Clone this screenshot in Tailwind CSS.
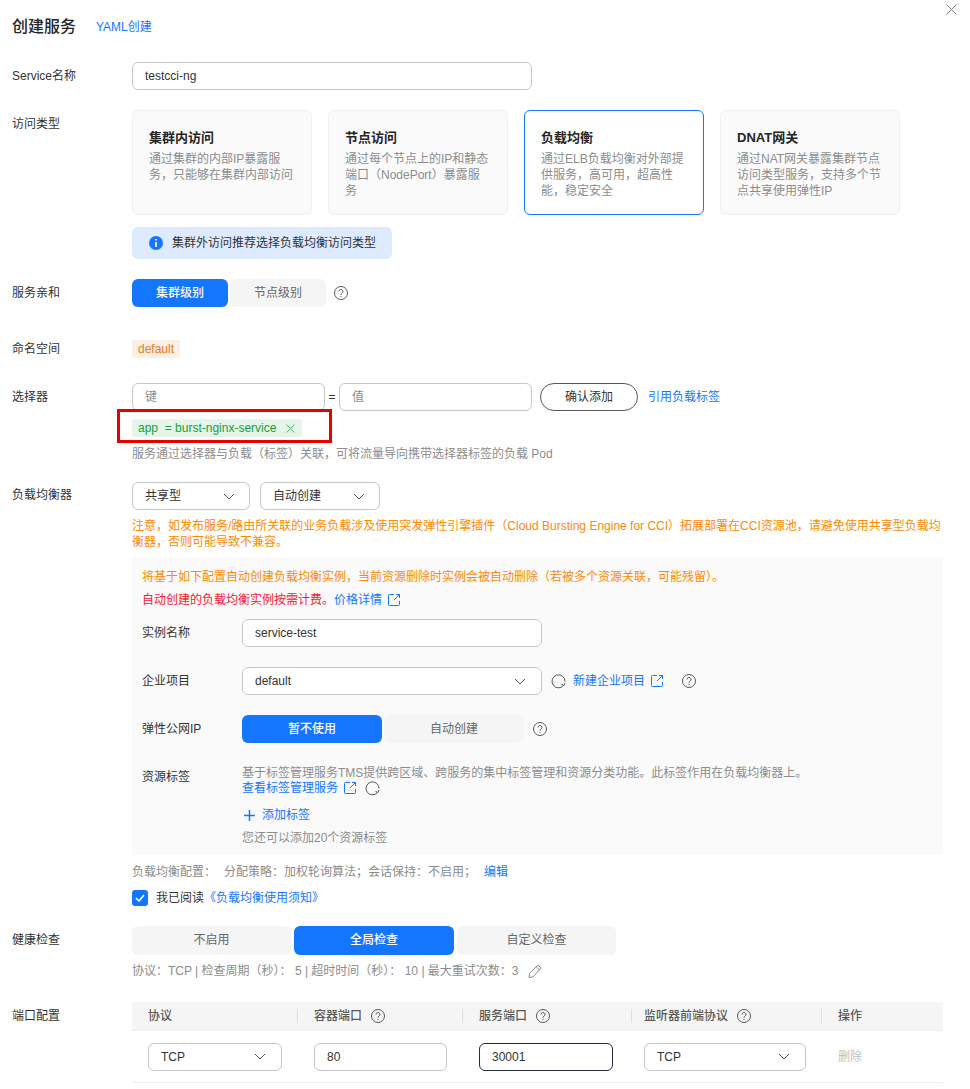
<!DOCTYPE html>
<html lang="zh-CN">
<head>
  <meta charset="UTF-8">
  <meta name="viewport" content="width=device-width, initial-scale=1.0">
  <title>创建服务</title>
  <script src="https://cdn.jsdelivr.net/npm/@tailwindcss/browser@4"></script>
</head>
<body class="bg-white h-[1089px] overflow-hidden font-['Liberation_Sans','Noto_Sans_CJK_SC',sans-serif] text-[12px] text-[#333]">
  <div class="relative pl-3 pr-[27px]">
    <!-- Close -->
    <svg class="absolute left-[946px] top-[4px] w-[11px] h-[11px] text-[#808080]" viewBox="0 0 11 11" fill="none" stroke="currentColor" stroke-width="1"><path d="M.5.5l10 10M10.5.5l-10 10"/></svg>

    <!-- Header -->
    <div class="flex items-center h-[54px]">
      <h1 class="text-[16px] font-medium text-[#252525] w-[84px]">创建服务</h1>
      <a class="text-[#1476ff]">YAML创建</a>
    </div>

    <!-- Service name -->
    <div class="flex mt-[8px]">
      <div class="w-[120px] leading-[28px]">Service名称</div>
      <div class="w-[400px] h-7 px-3 leading-[26px] border border-[#c7c7c7] rounded-md">testcci-ng</div>
    </div>

    <!-- Access type -->
    <div class="flex mt-[20px]">
      <div class="w-[120px] leading-[28px]">访问类型</div>
      <div>
        <div class="flex gap-4">
          <div class="w-[180px] h-[105px] bg-[#fafafa] border border-[#f0f0f0] rounded-md px-4 pt-[19px]">
            <div class="text-[13px] font-semibold leading-4 text-[#252525]">集群内访问</div>
            <p class="mt-[5px] leading-4 text-[#8c8c8c]">通过集群的内部IP暴露服务，只能够在集群内部访问</p>
          </div>
          <div class="w-[180px] h-[105px] bg-[#fafafa] border border-[#f0f0f0] rounded-md px-4 pt-[19px]">
            <div class="text-[13px] font-semibold leading-4 text-[#252525]">节点访问</div>
            <p class="mt-[5px] leading-4 text-[#8c8c8c]">通过每个节点上的IP和静态端口（NodePort）暴露服务</p>
          </div>
          <div class="w-[180px] h-[105px] bg-white border border-[#1476ff] rounded-md px-4 pt-[19px]">
            <div class="text-[13px] font-semibold leading-4 text-[#252525]">负载均衡</div>
            <p class="mt-[5px] leading-4 text-[#8c8c8c]">通过ELB负载均衡对外部提供服务，高可用，超高性能，稳定安全</p>
          </div>
          <div class="w-[180px] h-[105px] bg-[#fafafa] border border-[#f0f0f0] rounded-md px-4 pt-[19px]">
            <div class="text-[13px] font-semibold leading-4 text-[#252525]">DNAT网关</div>
            <p class="mt-[5px] leading-4 text-[#8c8c8c]">通过NAT网关暴露集群节点访问类型服务，支持多个节点共享使用弹性IP</p>
          </div>
        </div>
        <div class="mt-3 w-[260px] h-8 flex items-center gap-[9px] pl-[17px] bg-[#deebff] rounded-md">
          <svg class="w-[14px] h-[14px] shrink-0" viewBox="0 0 14 14"><circle cx="7" cy="7" r="7" fill="#1476ff"/><path d="M6.200 3h1.600v1.600H6.200zM6.200 6h1.600v5H6.200z" fill="#fff"/></svg>
          <span>集群外访问推荐选择负载均衡访问类型</span>
        </div>
      </div>
    </div>

    <!-- Affinity -->
    <div class="flex mt-[20px]">
      <div class="w-[120px] leading-[28px]">服务亲和</div>
      <div class="flex items-center">
        <div class="flex gap-[2px]">
          <div class="w-[96px] h-7 leading-[28px] text-center font-medium text-white bg-[#1476ff] rounded-md">集群级别</div>
          <div class="w-[96px] h-7 leading-[28px] text-center text-[#666] bg-[#f5f5f5] rounded-md">节点级别</div>
        </div>
        <svg class="ml-2 w-[14px] h-[14px] text-[#595959]" viewBox="0 0 14 14" fill="none" stroke="currentColor"><circle cx="7" cy="7" r="6.500"/><path d="M5 5.500a2 2 0 1 1 3 1.700c-.7.4-1 .8-1 1.600M7 10v1"/></svg>
      </div>
    </div>

    <!-- Namespace -->
    <div class="flex mt-[28px]">
      <div class="w-[120px] leading-[28px]">命名空间</div>
      <div class="flex items-center">
        <span class="h-[18px] px-[6px] leading-[18px] text-[#e8791f] bg-[#fcefe3] rounded-[3px]">default</span>
      </div>
    </div>

    <!-- Selector -->
    <div class="flex mt-[20px]">
      <div class="w-[120px] leading-[28px]">选择器</div>
      <div class="relative">
        <div class="flex items-center">
          <div class="w-[193px] h-7 px-3 leading-[26px] text-[#8c8c8c] border border-[#c7c7c7] rounded-md">键</div>
          <span class="w-[14px] text-center">=</span>
          <div class="w-[193px] h-7 px-3 leading-[26px] text-[#8c8c8c] border border-[#c7c7c7] rounded-md">值</div>
          <div class="ml-2 w-[98px] h-7 leading-[26px] text-center border border-[#595959] rounded-full">确认添加</div>
          <a class="ml-[10px] text-[#1476ff] -mt-[1px]">引用负载标签</a>
        </div>
        <div class="mt-2 w-[170px] h-[18px] flex items-center justify-between pl-[6px] pr-[7px] bg-[#e5f5e9] text-[#12a139] rounded-[3px]">
          <span>app &nbsp;= burst-nginx-service</span>
          <svg class="w-[9px] h-[9px] text-[#4dbb6d]" viewBox="0 0 9 9" fill="none" stroke="currentColor"><path d="M.5.5l8 8M8.500.5l-8 8"/></svg>
        </div>
        <div class="absolute left-[-15px] top-[26px] w-[215px] h-[34px] border-[3px] border-[#e60000]"></div>
        <div class="mt-[9px] leading-4 text-[#8c8c8c]">服务通过选择器与负载（标签）关联，可将流量导向携带选择器标签的负载 Pod</div>
      </div>
    </div>

    <!-- Load balancer -->
    <div class="flex mt-5">
      <div class="w-[120px] leading-[27px] shrink-0">负载均衡器</div>
      <div class="w-[811px]">
        <div class="flex gap-[10px]">
          <div class="w-[118px] h-7 pl-3 pr-[14px] flex items-center justify-between border border-[#c7c7c7] rounded-md">
            <span>共享型</span>
            <svg class="w-[12px] h-[7px] text-[#595959]" viewBox="0 0 12 7" fill="none" stroke="currentColor"><path d="M1 1l5 5 5-5"/></svg>
          </div>
          <div class="w-[120px] h-7 pl-3 pr-[14px] flex items-center justify-between border border-[#c7c7c7] rounded-md">
            <span>自动创建</span>
            <svg class="w-[12px] h-[7px] text-[#595959]" viewBox="0 0 12 7" fill="none" stroke="currentColor"><path d="M1 1l5 5 5-5"/></svg>
          </div>
        </div>
        <p class="mt-2 leading-4 text-[#ff8a00]">注意，如发布服务/路由所关联的业务负载涉及使用突发弹性引擎插件（Cloud Bursting Engine for CCI）拓展部署在CCI资源池，请避免使用共享型负载均衡器，否则可能导致不兼容。</p>

        <!-- Auto create panel -->
        <div class="mt-[7px] h-[298px] bg-[#fafafa] px-[10px] pt-[12px]">
          <div class="leading-4 text-[#ff8a00]">将基于如下配置自动创建负载均衡实例，当前资源删除时实例会被自动删除（若被多个资源关联，可能残留）。</div>
          <div class="mt-[7px] leading-4 flex items-center text-[#f5222d]">
            <span>自动创建的负载均衡实例按需计费。</span>
            <a class="text-[#1476ff]">价格详情</a>
            <svg class="ml-[6px] w-[12px] h-[12px] text-[#1476ff]" viewBox="0 0 12 12" fill="none" stroke="currentColor"><path d="M6 .5H1.500a1 1 0 0 0-1 1v9a1 1 0 0 0 1 1h9a1 1 0 0 0 1-1V7M8 .5h3.500V4M11.500.5L6 6"/></svg>
          </div>
          <div class="flex mt-[11px]">
            <div class="w-[100px] leading-[28px]">实例名称</div>
            <div class="w-[300px] h-7 px-3 leading-[26px] bg-white border border-[#c7c7c7] rounded-md">service-test</div>
          </div>
          <div class="flex items-center mt-5">
            <div class="w-[100px] leading-[28px]">企业项目</div>
            <div class="w-[300px] h-7 pl-3 pr-[15px] flex items-center justify-between bg-white border border-[#c7c7c7] rounded-md">
              <span>default</span>
              <svg class="w-[12px] h-[7px] text-[#595959]" viewBox="0 0 12 7" fill="none" stroke="currentColor"><path d="M1 1l5 5 5-5"/></svg>
            </div>
            <svg class="ml-[9px] w-[15px] h-[15px] text-[#595959]" viewBox="0 0 15 15" fill="none" stroke="currentColor"><path d="M12.500 11.500A6.500 6.500 0 1 1 14 7.500M10.500 10.500l2.500 1 1-2.500"/></svg>
            <a class="ml-[7px] text-[#1476ff]">新建企业项目</a>
            <svg class="ml-[6px] w-[12px] h-[12px] text-[#1476ff]" viewBox="0 0 12 12" fill="none" stroke="currentColor"><path d="M6 .5H1.500a1 1 0 0 0-1 1v9a1 1 0 0 0 1 1h9a1 1 0 0 0 1-1V7M8 .5h3.500V4M11.500.5L6 6"/></svg>
            <svg class="ml-[19px] w-[14px] h-[14px] text-[#595959]" viewBox="0 0 14 14" fill="none" stroke="currentColor"><circle cx="7" cy="7" r="6.500"/><path d="M5 5.500a2 2 0 1 1 3 1.700c-.7.4-1 .8-1 1.600M7 10v1"/></svg>
          </div>
          <div class="flex items-center mt-5">
            <div class="w-[100px] leading-[28px]">弹性公网IP</div>
            <div class="flex gap-[2px]">
              <div class="w-[140px] h-7 leading-[28px] text-center font-medium text-white bg-[#1476ff] rounded-md">暂不使用</div>
              <div class="w-[140px] h-7 leading-[28px] text-center text-[#666] bg-[#f5f5f5] rounded-md">自动创建</div>
            </div>
            <svg class="ml-[9px] w-[14px] h-[14px] text-[#595959]" viewBox="0 0 14 14" fill="none" stroke="currentColor"><circle cx="7" cy="7" r="6.500"/><path d="M5 5.500a2 2 0 1 1 3 1.700c-.7.4-1 .8-1 1.600M7 10v1"/></svg>
          </div>
          <div class="flex mt-5">
            <div class="w-[100px] leading-[28px]">资源标签</div>
            <div class="pt-[2px]">
              <div class="leading-4 text-[#8c8c8c]">基于标签管理服务TMS提供跨区域、跨服务的集中标签管理和资源分类功能。此标签作用在负载均衡器上。</div>
              <div class="-mt-[1px] flex items-center leading-4">
                <a class="text-[#1476ff]">查看标签管理服务</a>
                <svg class="ml-[6px] w-[12px] h-[12px] text-[#1476ff]" viewBox="0 0 12 12" fill="none" stroke="currentColor"><path d="M6 .5H1.500a1 1 0 0 0-1 1v9a1 1 0 0 0 1 1h9a1 1 0 0 0 1-1V7M8 .5h3.500V4M11.500.5L6 6"/></svg>
                <svg class="ml-[9px] w-[15px] h-[15px] text-[#595959]" viewBox="0 0 15 15" fill="none" stroke="currentColor"><path d="M12.500 11.500A6.500 6.500 0 1 1 14 7.500M10.500 10.500l2.500 1 1-2.500"/></svg>
              </div>
              <div class="mt-[11px] flex items-center gap-[7px] leading-4 text-[#1476ff]">
                <svg class="ml-[2px] w-[11px] h-[11px]" viewBox="0 0 11 11" fill="none" stroke="currentColor" stroke-width="1.500"><path d="M5.500 0v11M0 5.500h11"/></svg>
                <span>添加标签</span>
              </div>
              <div class="mt-[7px] leading-4 text-[#8c8c8c]">您还可以添加20个资源标签</div>
            </div>
          </div>
        </div>

        <div class="mt-[9px] flex leading-4 text-[#8c8c8c]">
          <span class="w-[92px]">负载均衡配置：</span>
          <span>分配策略：加权轮询算法；会话保持：不启用；</span>
          <a class="ml-[8px] text-[#1476ff]">编辑</a>
        </div>
        <div class="mt-[10px] flex items-center h-4">
          <span class="w-4 h-4 flex items-center justify-center bg-[#1476ff] rounded-[3px]">
            <svg class="w-[10px] h-[8px]" viewBox="0 0 10 8" fill="none" stroke="#fff" stroke-width="1.500"><path d="M1 4l3 3 5-6"/></svg>
          </span>
          <span class="ml-2">我已阅读</span>
          <a class="text-[#1476ff]">《负载均衡使用须知》</a>
        </div>
      </div>
    </div>

    <!-- Health check -->
    <div class="flex mt-[20px]">
      <div class="w-[120px] leading-[28px] shrink-0">健康检查</div>
      <div>
        <div class="flex gap-[3px]">
          <div class="w-[159px] h-[29px] leading-[29px] text-center text-[#666] bg-[#f5f5f5] rounded-md">不启用</div>
          <div class="w-[160px] h-[29px] leading-[29px] text-center font-medium text-white bg-[#1476ff] rounded-md">全局检查</div>
          <div class="w-[159px] h-[29px] leading-[29px] text-center text-[#666] bg-[#f5f5f5] rounded-md">自定义检查</div>
        </div>
        <div class="mt-[8px] flex items-center leading-4 text-[#8c8c8c]">
          <span>协议：TCP | 检查周期（秒）：&nbsp;5 | 超时时间（秒）：&nbsp;10 | 最大重试次数：3</span>
          <svg class="ml-[9px] w-[14px] h-[14px] text-[#8c8c8c]" viewBox="0 0 14 14" fill="none" stroke="currentColor"><path d="M10 1l3 3-8 9-4 .5.5-4zM8.500 3l3 3"/></svg>
        </div>
      </div>
    </div>

    <!-- Port config -->
    <div class="flex mt-[23px]">
      <div class="w-[120px] leading-[28px] shrink-0">端口配置</div>
      <div class="w-[811px]">
        <div class="h-7 flex items-center bg-[#f5f5f5] text-[#595959] font-medium">
          <div class="w-[166px] pl-4 h-[14px] leading-[14px] border-r border-[#dfdfdf]">协议</div>
          <div class="w-[165px] pl-4 h-[14px] leading-[14px] border-r border-[#dfdfdf] flex items-center gap-[9px]">容器端口
            <svg class="w-[14px] h-[14px] text-[#595959]" viewBox="0 0 14 14" fill="none" stroke="currentColor"><circle cx="7" cy="7" r="6.500"/><path d="M5 5.500a2 2 0 1 1 3 1.700c-.7.4-1 .8-1 1.600M7 10v1"/></svg>
          </div>
          <div class="w-[169px] pl-4 h-[14px] leading-[14px] border-r border-[#dfdfdf] flex items-center gap-[9px]">服务端口
            <svg class="w-[14px] h-[14px] text-[#595959]" viewBox="0 0 14 14" fill="none" stroke="currentColor"><circle cx="7" cy="7" r="6.500"/><path d="M5 5.500a2 2 0 1 1 3 1.700c-.7.4-1 .8-1 1.600M7 10v1"/></svg>
          </div>
          <div class="w-[190px] pl-3 h-[14px] leading-[14px] border-r border-[#dfdfdf] flex items-center gap-[9px]">监听器前端协议
            <svg class="w-[14px] h-[14px] text-[#595959]" viewBox="0 0 14 14" fill="none" stroke="currentColor"><circle cx="7" cy="7" r="6.500"/><path d="M5 5.500a2 2 0 1 1 3 1.700c-.7.4-1 .8-1 1.600M7 10v1"/></svg>
          </div>
          <div class="pl-4">操作</div>
        </div>
        <div class="h-[53px] flex items-center border-y border-[#ededed]">
          <div class="w-[166px] pl-4">
            <div class="w-[134px] h-7 pl-3 pr-[15px] flex items-center justify-between border border-[#c7c7c7] rounded-md">
              <span>TCP</span>
              <svg class="w-[12px] h-[7px] text-[#595959]" viewBox="0 0 12 7" fill="none" stroke="currentColor"><path d="M1 1l5 5 5-5"/></svg>
            </div>
          </div>
          <div class="w-[165px] pl-4">
            <div class="w-[133px] h-7 px-3 leading-[26px] border border-[#c7c7c7] rounded-md">80</div>
          </div>
          <div class="w-[165px] pl-4">
            <div class="w-[134px] h-7 px-3 leading-[26px] border border-[#252b3a] rounded-md">30001</div>
          </div>
          <div class="w-[194px] pl-[16px]">
            <div class="w-[162px] h-7 pl-3 pr-[15px] flex items-center justify-between border border-[#c7c7c7] rounded-md">
              <span>TCP</span>
              <svg class="w-[12px] h-[7px] text-[#595959]" viewBox="0 0 12 7" fill="none" stroke="currentColor"><path d="M1 1l5 5 5-5"/></svg>
            </div>
          </div>
          <div class="pl-4 text-[#bfbfbf]">删除</div>
        </div>
      </div>
    </div>
  </div>
</body>
</html>
